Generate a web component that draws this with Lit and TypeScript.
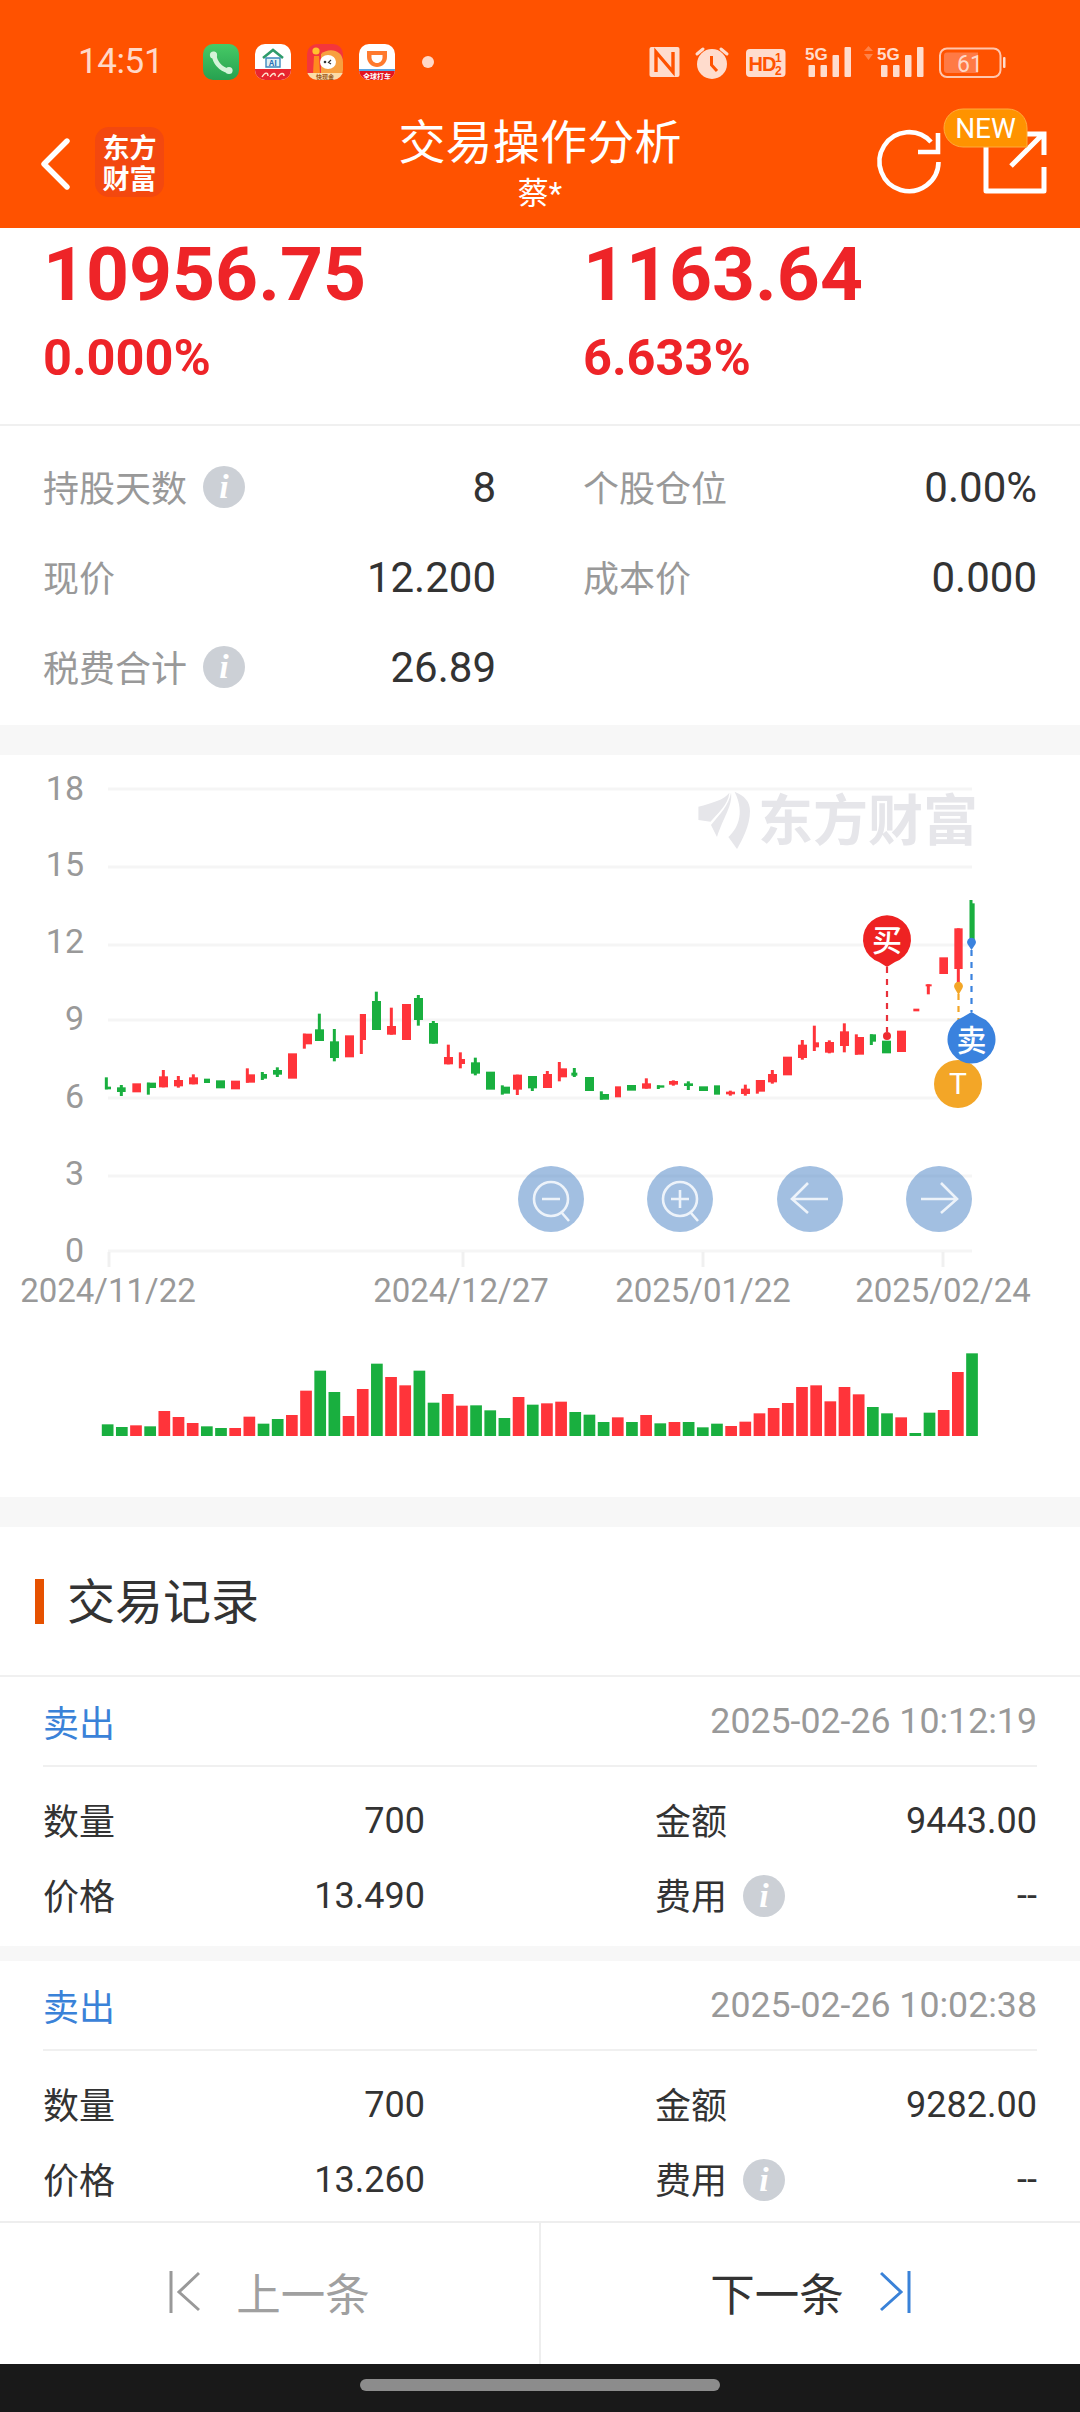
import { LitElement, html, css, svg } from "lit";
import { customElement } from "lit/decorators.js";

const RED = "#ff343a";
const GREEN = "#19af3f";
type C = [string, number, number, number, number, number?, number?, number?];
const r = RED, g = GREEN;
const candlesA: C[] = [
  [g,45,63,260,268,49,232,268],[g,81,107,262,276,94,255,288],[r,127,153,250,277],[g,171,198,248,264,175,248,284],
  [r,207,234,229,262,220,210,262],[r,252,279,240,259,265,228,263],[r,297,324,232,253,310,223,253],[g,342,360,236,249],
  [g,378,405,241,265],[r,423,450,242,268],[r,468,495,223,248,472,205,248],[g,513,531,222,236,517,216,240],
  [g,549,576,210,224,562,202,231],[r,594,621,160,236],[r,639,666,101,133,643,101,146],[g,675,702,88,123,688,41,123],
  [g,720,747,124,174,733,87,184],[r,765,792,106,172],[r,810,828,42,120,814,42,162],[g,846,873,3,90,859,-25,90],
  [r,891,918,78,104,904,23,104],[r,936,963,12,120],[g,972,999,-6,60,985,-15,77],[g,1017,1044,69,131,1030,63,131],
  [r,1062,1089,171,193,1075,134,193],[r,1107,1125,177,192,1111,157,205],[g,1143,1170,187,221,1156,173,226],
  [g,1188,1215,215,269],[g,1233,1260,260,281,1237,256,284],[r,1269,1296,224,269,1282,224,285],[g,1314,1341,228,265,1327,228,273],
];
const candlesB: C[] = [
  [r,9,36,222,264,22,213,264],[r,54,81,205,232,58,186,244],[g,94,112,218,227,103,204,231],[g,135,162,231,273],
  [g,180,207,282,299,184,274,299],[r,225,243,259,292],[g,261,288,255,272],[r,306,333,250,266,319,235,266],
  [g,351,373,256,263,355,256,267],[r,387,414,243,254,400,241,257],[g,432,459,250,258,445,244,270],[g,477,504,259,273],
  [g,522,540,256,284],[r,558,585,275,283,571,272,287],[r,603,630,266,282,616,254,287],[r,648,675,240,275,652,240,281],
  [r,684,711,222,247,697,210,251],[r,729,756,170,226],[r,774,801,134,174,787,120,179],[r,819,837,127,142,823,77,153],
  [r,855,882,126,158,868,121,160],[r,900,927,94,138,913,70,157],[r,945,972,111,164,949,103,164],[g,990,1008,103,125,994,103,135],
  [g,1026,1053,122,160],[r,1071,1098,92,156],[r,1120,1138,26,34],[r,1157,1175,-47,-41,1165,-47,-17],
  [r,1198,1224,-128,-78],[r,1243,1268,-215,-93,1255,-215,-50],[g,1291,1304,-290,-180,1293,-300,-180],
];
const volumes: [string, number][] = [
  [g,253],[g,261],[r,256],[g,259],[r,213],[r,231],[r,249],[g,259],[g,264],[r,264],[r,230],[g,251],[g,237],[r,225],[r,152],[g,92],
  [g,156],[r,228],[r,147],[g,71],[r,111],[r,136],[g,92],[g,188],[r,162],[r,197],[g,196],[g,211],[g,234],[r,171],[g,194],[r,190],
  [r,185],[g,216],[g,224],[g,246],[r,232],[g,246],[r,225],[g,250],[r,246],[g,246],[g,262],[g,251],[r,258],[r,245],[r,220],[r,204],
  [r,189],[r,141],[r,136],[r,184],[r,141],[r,163],[g,201],[g,220],[r,232],[g,279],[g,218],[r,210],[r,96],[g,40],
];
const gridYs = [789, 867, 945, 1020, 1098, 1176, 1251];
const yLabels = ["18", "15", "12", "9", "6", "3", "0"];
const yLabelCenters = [788, 864, 941, 1018, 1096, 1173, 1250];
const dates: [string, number][] = [["2024/11/22", 108], ["2024/12/27", 461], ["2025/01/22", 703], ["2025/02/24", 943]];
const ticks = [109, 463, 703, 943];

const candleTpl = (c: C, off: number) => {
  const [col, x1, x2, y1, y2, wx, wy1, wy2] = c;
  return svg`
    ${wx !== undefined ? svg`<rect x=${wx + off - 4.5} y=${wy1} width="9" height=${wy2! - wy1!} fill=${col}></rect>` : ""}
    <rect x=${x1 + off} y=${y1} width=${x2 - x1} height=${y2 - y1} fill=${col}></rect>`;
};

const chart = () => html`
<svg class="chart" width="1080" height="742" viewBox="0 755 1080 742" xmlns="http://www.w3.org/2000/svg">
  ${gridYs.map((y) => svg`<line x1="108" x2="972" y1=${y} y2=${y} stroke="#f5f5f5" stroke-width="3"></line>`)}
  ${ticks.map((x) => svg`<line x1=${x} x2=${x} y1="1252" y2="1267" stroke="#f0f0f0" stroke-width="3"></line>`)}
  <g fill="#e6e6ea">
    <path d="M698.4 806.7C712 803 724 800 729.4 792.7C728 805 718 813 710.5 821.7L698.4 820Z"></path>
    <path d="M731 792.7C733 805 723 818 717 837L711 825C720 814 729 805 731 792.7Z"></path>
    <path d="M734.6 791.7C745 796 750 802 750 811C750 826 742 840 737 849L728.4 837C736 830 746 815 734.6 791.7Z"></path>
    <text class="wm" x="758" y="840">东方财富</text>
  </g>
  ${yLabels.map((t, i) => svg`<text class="axis" x="84" y=${yLabelCenters[i] + 12} text-anchor="end">${t}</text>`)}
  ${dates.map(([t, x]) => svg`<text class="date" x=${x} y="1302" text-anchor="middle">${t}</text>`)}
  <g transform="translate(90 1000) scale(0.33333)">
    ${candlesA.map((c) => candleTpl(c, 0))}
    ${candlesB.map((c) => candleTpl(c, 1350))}
  </g>
  ${volumes.map(([col, top], i) => svg`<rect x=${101.8 + i * 14.17} y=${1340 + top / 3} width="11.7" height=${96 - top / 3} fill=${col}></rect>`)}

  <g fill="#4781c5" opacity="0.5">
    <circle cx="551" cy="1199" r="33"></circle><circle cx="680" cy="1199" r="33"></circle>
    <circle cx="810" cy="1199" r="33"></circle><circle cx="939" cy="1199" r="33"></circle>
  </g>
  <g fill="none" stroke="#edf3fa" stroke-width="2.6">
    <circle cx="551" cy="1199" r="17"></circle><path d="M562 1213L569 1221M542 1199H560"></path>
    <circle cx="680" cy="1199" r="17"></circle><path d="M691 1213L698 1221M671 1199H689M680 1190V1208"></path>
    <path d="M828 1199H792M808 1183L792 1199L808 1213"></path>
    <path d="M921 1199H957M941 1183L957 1199L941 1213"></path>
  </g>

  <g fill="none" stroke-width="2.2" stroke-dasharray="6 6">
    <path d="M887 967V1032" stroke="#e8303a"></path>
    <path d="M958.5 994V1020" stroke="#f3a627"></path>
    <path d="M971.5 950V1012" stroke="#3a82de"></path>
  </g>
  <circle cx="887" cy="1036" r="4" fill="#ee2a30"></circle>
  <path d="M958.5 995L954.5 988A4.4 4.4 0 1 1 962.5 988Z" fill="#f3a627"></path>
  <path d="M971.5 950L967.5 944A4.4 4.4 0 1 1 975.5 944Z" fill="#3a82de"></path>

  <path d="M887 967L879 962A24 24 0 1 1 895 962Z" fill="#ee2222"></path>
  <text class="mark" x="887" y="951" text-anchor="middle">买</text>
  <circle cx="958" cy="1084" r="24" fill="#f3a627"></circle>
  <text class="mark t" x="958" y="1094" text-anchor="middle">T</text>
  <path d="M971.5 1012L980 1017A24 24 0 1 1 963 1017Z" fill="#3a82de"></path>
  <text class="mark" x="971.5" y="1051" text-anchor="middle">卖</text>
</svg>`;

const statusRight = () => html`
<svg class="sr" width="365" height="50" viewBox="645 40 365 50" xmlns="http://www.w3.org/2000/svg">
  <g fill="#ffdccd">
    <rect x="649.5" y="47" width="30" height="30" rx="2"></rect>
    <circle cx="712" cy="64" r="15"></circle>
    <rect x="746" y="49" width="39.5" height="28" rx="4"></rect>
    <text class="five" x="805" y="60">5G</text>
    <rect x="808.5" y="65" width="6.5" height="12" rx="1"></rect><rect x="820.5" y="65" width="6.5" height="12" rx="1"></rect>
    <rect x="832.5" y="55" width="6.5" height="22" rx="1"></rect><rect x="844.5" y="47" width="6.5" height="30" rx="1"></rect>
    <text class="five" x="877" y="60">5G</text>
    <rect x="881" y="65" width="6.5" height="12" rx="1"></rect><rect x="893" y="65" width="6.5" height="12" rx="1"></rect>
    <rect x="905" y="55" width="6.5" height="22" rx="1"></rect><rect x="917" y="47" width="6.5" height="30" rx="1"></rect>
    <path d="M864 51L868.5 46L873 51ZM864 54H873L868.5 60Z" opacity="0.35"></path>
    <rect x="1003" y="57" width="2.5" height="11" rx="1"></rect>
  </g>
  <g fill="none" stroke="#ffdccd" stroke-width="3">
    <path d="M697 54L703 49M727 54L721 49" stroke-linecap="round"></path>
  </g>
  <path d="M656 72V52L673 72V52" fill="none" stroke="#ff5200" stroke-width="3.4"></path>
  <path d="M711.5 56V65L717 71" fill="none" stroke="#ff5200" stroke-width="3"></path>
  <text class="hd" x="748.5" y="71">HD</text>
  <text class="half" x="775" y="62">1</text><text class="half" x="775" y="75">2</text>
  <rect x="940" y="48.5" width="60.5" height="28.5" rx="7" fill="none" stroke="#ffc6ae" stroke-width="2"></rect>
  <path d="M947 52.5H978V73H947A3 3 0 0 1 944 70V55.5A3 3 0 0 1 947 52.5Z" fill="#ff7a45"></path>
  <text class="batt" x="970" y="72" text-anchor="middle">61</text>
</svg>`;

const headerRight = () => html`
<svg width="180" height="95" viewBox="870 105 180 95" xmlns="http://www.w3.org/2000/svg">
  <g fill="none" stroke="#fff" stroke-width="5">
    <path d="M938.5 162A29.5 29.5 0 1 1 931 142" stroke-width="4.6"></path>
    <path d="M918 152H938V133" stroke-width="4.6"></path>
    <path d="M986 147V191H1044V167" stroke-linejoin="round"></path>
    <path d="M1011 166L1043 134M1020 134H1044V155"></path>
  </g>
  <path d="M963 109H1008A19 19 0 0 1 1027 128V147H963A19 19 0 0 1 944 128A19 19 0 0 1 963 109Z" fill="#ff9300" stroke="#ffab3c"></path>
  <text class="new" x="985.5" y="138" text-anchor="middle">NEW</text>
</svg>`;

@customElement("app-root")
export class AppRoot extends LitElement {
  static styles = css`
    :host { display: block; width: 1080px; height: 2412px; overflow: hidden; background: #fff;
      font-family: Roboto, "Noto Sans CJK SC", sans-serif; color: #333; }
    * { box-sizing: border-box; }
    svg { display: block; }
    .page { display: flex; flex-direction: column; height: 2412px; }

    .header { background: #ff5200; height: 228px; flex: none; color: #fff; }
    .status { height: 108px; display: flex; align-items: flex-start; padding: 44px 0 0 78px; position: relative; }
    .time { width: 125px; font-size: 35px; line-height: 36px; color: #ffd8c8; letter-spacing: -0.4px; }
    .apps { display: flex; gap: 16px; align-items: center; }
    .app { width: 36px; height: 36px; border-radius: 10px; overflow: hidden; }
    .dot { width: 12px; height: 12px; border-radius: 50%; background: #ffd8c8; margin: 12px 0 0 27px; }
    .sr { margin: -4px 0 0 auto; margin-right: 70px; }
    .sr .five { font: 700 17px "Liberation Sans Narrow", "Liberation Sans", sans-serif; }
    .sr .hd { font: 700 20px "Liberation Sans", sans-serif; fill: #ff5200; letter-spacing: -1px; }
    .sr .half { font: 700 12px "Liberation Sans", sans-serif; fill: #ff5200; }
    .sr .batt { font: 400 23px Roboto, sans-serif; fill: #ffd8c8; }
    .app text { font-family: "Noto Sans CJK SC", sans-serif; font-weight: 700; }

    .titlebar { height: 120px; display: grid; grid-template-columns: 1fr auto 1fr; }
    .tl { display: flex; align-items: flex-start; gap: 25px; padding: 19px 0 0 40px; }
    .chev { margin-top: 11px; }
    .logo { width: 69px; height: 70px; border-radius: 14px; background: #f3480f; color: #fff; font-family: "Noto Sans CJK SC", sans-serif;
      font-weight: 700; font-size: 27px; line-height: 31px; display: flex; flex-direction: column; align-items: center; justify-content: center; }
    .tc { text-align: center; padding-top: 5px; }
    .t1 { font-size: 47px; line-height: 60px; letter-spacing: 0.2px; }
    .t2 { font-size: 31px; line-height: 40px; margin-top: 1px; }
    .tr { display: flex; justify-content: flex-end; padding: 0 30px 0 0; margin-top: -3px; }
    .tr text.new { font: 400 28px Roboto, sans-serif; fill: #fff; }

    .scroll { flex: 1; min-height: 0; overflow: hidden; }
    .cols { display: grid; grid-template-columns: 453px 454px; column-gap: 87px; padding: 0 43px 0 43px; }
    .amounts { border-bottom: 2px solid #f0f0f0; height: 198px; padding-top: 1px; }
    .big { font-size: 75px; line-height: 90px; font-weight: 700; color: #ee2428; }
    .pct { font-size: 50.5px; line-height: 77px; font-weight: 700; color: #ee2428; }
    .stats { padding-top: 16px; padding-bottom: 13px; grid-auto-rows: 90px; }
    .stat { display: flex; align-items: center; }
    .label { font-size: 36px; color: #999; margin-top: -3px; }
    .val { margin-left: auto; font-size: 42px; color: #333; }
    .info { width: 42px; height: 42px; margin-left: 16px; border-radius: 50%; background: #ccd0d6; color: #fff; font: italic 700 34px/42px "Liberation Serif", serif;
      text-align: center; flex: none; }
    .gap { height: 30px; background: #f7f7f7; }
    .gap2 { height: 15px; background: #f7f7f7; }
    .chart text.axis { font: 400 34px Roboto, sans-serif; fill: #999; }
    .chart text.date { font: 400 33px Roboto, sans-serif; fill: #999; }
    .chart text.wm { font: 700 55px "Noto Sans CJK SC", sans-serif; fill: #e6e6ea; }
    .chart text.mark { font: 500 30px "Noto Sans CJK SC", sans-serif; fill: #fff; }
    .chart text.mark.t { font: 400 30px Roboto, sans-serif; }

    .rtitle { height: 150px; border-bottom: 2px solid #f0f0f0; display: flex; align-items: center; padding-left: 35px; }
    .rbar { width: 9px; height: 45px; background: #e65100; margin-right: 23px; }
    .rname { font-size: 48px; line-height: 60px; color: #333; margin-top: 3px; }
    .rhead { margin: 0 43px 0 43px; height: 90px; display: flex; align-items: center; justify-content: space-between; border-bottom: 2px solid #f0f0f0; }
    .sell { font-size: 36px; color: #3a82d8; }
    .when { font-size: 35.7px; color: #999; }
    .rgrid { display: grid; grid-template-columns: 382px 382px; column-gap: 230px; padding: 16px 43px 13px 43px; grid-auto-rows: 75px; }
    .rc { display: flex; align-items: center; font-size: 36px; color: #333; }
    .rc .cn { margin-top: -4px; }
    .rc .v { margin-left: auto; }

    .footer { flex: none; height: 143px; border-top: 2px solid #eee; display: grid; grid-template-columns: 539px 2px 539px; }
    .fbtn { display: flex; align-items: center; justify-content: center; gap: 36px; font-size: 44.5px; color: #333; padding-bottom: 4px; }
    .fbtn.off { color: #a0a0a0; }
    .fbtn span { margin-top: -1px; }
    .fdiv { background: #eee; }
    .nav { flex: none; height: 48px; background: #191919; display: flex; justify-content: center; padding-top: 15px; }
    .pill { width: 360px; height: 12px; border-radius: 6px; background: #8c8c8c; }
  `;

  private info() { return html`<span class="info">i</span>`; }

  private rec(when: string, qty: string, amt: string, price: string) {
    return html`
      <div class="rhead"><span class="sell">卖出</span><span class="when">${when}</span></div>
      <div class="rgrid">
        <div class="rc"><span class="cn">数量</span><span class="v">${qty}</span></div>
        <div class="rc"><span class="cn">金额</span><span class="v">${amt}</span></div>
        <div class="rc"><span class="cn">价格</span><span class="v">${price}</span></div>
        <div class="rc"><span class="cn">费用</span>${this.info()}<span class="v">--</span></div>
      </div>`;
  }

  render() {
    return html`
    <div class="page">
      <div class="header">
        <div class="status">
          <span class="time">14:51</span>
          <div class="apps">
            <svg class="app" viewBox="0 0 36 36"><defs><linearGradient id="pg" x1="0" y1="0" x2="0" y2="1"><stop offset="0" stop-color="#46ca66"></stop><stop offset="1" stop-color="#27a150"></stop></linearGradient></defs>
              <rect width="36" height="36" fill="url(#pg)"></rect>
              <path d="M11 10C11.5 18 17 25 26 27" fill="none" stroke="#d4f3d9" stroke-width="4.6" stroke-linecap="round"></path>
              <circle cx="10.5" cy="11" r="3.6" fill="#d4f3d9"></circle><circle cx="26" cy="26.5" r="3.6" fill="#d4f3d9"></circle></svg>
            <svg class="app" viewBox="0 0 36 36"><rect width="36" height="36" fill="#fff"></rect>
              <path d="M0 25H36V36H0Z" fill="#e8262f"></path>
              <path d="M8 14L18 6L28 14" fill="none" stroke="#2f9c6a" stroke-width="2.6"></path>
              <path d="M11 14H25V23H11Z" fill="#dff0f3" stroke="#3c88bd" stroke-width="1.4"></path>
              <text x="18" y="22" font-size="8" text-anchor="middle" fill="#2a6fb5">AI</text>
              <path d="M7 33C10 28 13 28 13 32M15 33C18 28 21 29 20 32M23 33C26 28 29 29 29 32" fill="none" stroke="#ffe6d0" stroke-width="1.4"></path></svg>
            <svg class="app" viewBox="0 0 36 36"><rect width="36" height="36" fill="#f4363c"></rect>
              <circle cx="9" cy="7" r="3.6" fill="#ffc22e"></circle>
              <path d="M7 12H12L13 30H6Z" fill="#ff8a1f"></path>
              <path d="M14 10C22 3 36 6 36 18V30H14Z" fill="#f7a040"></path>
              <ellipse cx="21" cy="18" rx="8" ry="7" fill="#fff"></ellipse>
              <circle cx="18" cy="18" r="1.3" fill="#333"></circle><path d="M24 16L21.5 18.4L24 20" fill="none" stroke="#333" stroke-width="1.2"></path>
              <rect y="29" width="36" height="7" fill="#fbdca8"></rect>
              <text x="18" y="35" font-size="6" text-anchor="middle" fill="#9a5a1e">快现金</text></svg>
            <svg class="app" viewBox="0 0 36 36"><rect width="36" height="36" fill="#fff"></rect>
              <path d="M8 7H28V13C28 19 23 23 18 23C13 23 8 19 8 13Z" fill="#ff7a2e"></path>
              <path d="M12.5 11H23.5V13.5C23.5 16.5 21 19 18 19C15 19 12.5 16.5 12.5 13.5Z" fill="#fff"></path>
              <rect y="25" width="36" height="2" fill="#5aa7e6"></rect>
              <rect y="27" width="36" height="9" fill="#e3141f"></rect>
              <text x="18" y="34.5" font-size="7" text-anchor="middle" fill="#fff">全球打车</text></svg>
          </div>
          <span class="dot"></span>
          ${statusRight()}
        </div>
        <div class="titlebar">
          <div class="tl">
            <svg class="chev" width="30" height="52" viewBox="0 0 30 52"><path d="M27 3L4 26L27 49" fill="none" stroke="#fff" stroke-width="5.4" stroke-linecap="round" stroke-linejoin="round"></path></svg>
            <div class="logo"><span>东方</span><span>财富</span></div>
          </div>
          <div class="tc"><div class="t1">交易操作分析</div><div class="t2">蔡*</div></div>
          <div class="tr">${headerRight()}</div>
        </div>
      </div>

      <div class="scroll">
        <div class="cols amounts">
          <div><div class="big">10956.75</div><div class="pct">0.000%</div></div>
          <div><div class="big">1163.64</div><div class="pct">6.633%</div></div>
        </div>
        <div class="cols stats">
          <div class="stat"><span class="label">持股天数</span>${this.info()}<span class="val">8</span></div>
          <div class="stat"><span class="label">个股仓位</span><span class="val">0.00%</span></div>
          <div class="stat"><span class="label">现价</span><span class="val">12.200</span></div>
          <div class="stat"><span class="label">成本价</span><span class="val">0.000</span></div>
          <div class="stat"><span class="label">税费合计</span>${this.info()}<span class="val">26.89</span></div>
        </div>
        <div class="gap"></div>
        ${chart()}
        <div class="gap"></div>
        <div class="rtitle"><span class="rbar"></span><span class="rname">交易记录</span></div>
        ${this.rec("2025-02-26 10:12:19", "700", "9443.00", "13.490")}
        <div class="gap2"></div>
        ${this.rec("2025-02-26 10:02:38", "700", "9282.00", "13.260")}
      </div>

      <div class="footer">
        <div class="fbtn off">
          <svg width="31" height="44" viewBox="0 0 31 44"><path d="M2 1V43M30 3L10 22L30 40" fill="none" stroke="#999" stroke-width="3"></path></svg>
          <span>上一条</span>
        </div>
        <div class="fdiv"></div>
        <div class="fbtn">
          <span>下一条</span>
          <svg width="31" height="44" viewBox="0 0 31 44"><path d="M29 1V43M1 3L21 22L1 40" fill="none" stroke="#3a82d8" stroke-width="3"></path></svg>
        </div>
      </div>
      <div class="nav"><div class="pill"></div></div>
    </div>`;
  }
}
